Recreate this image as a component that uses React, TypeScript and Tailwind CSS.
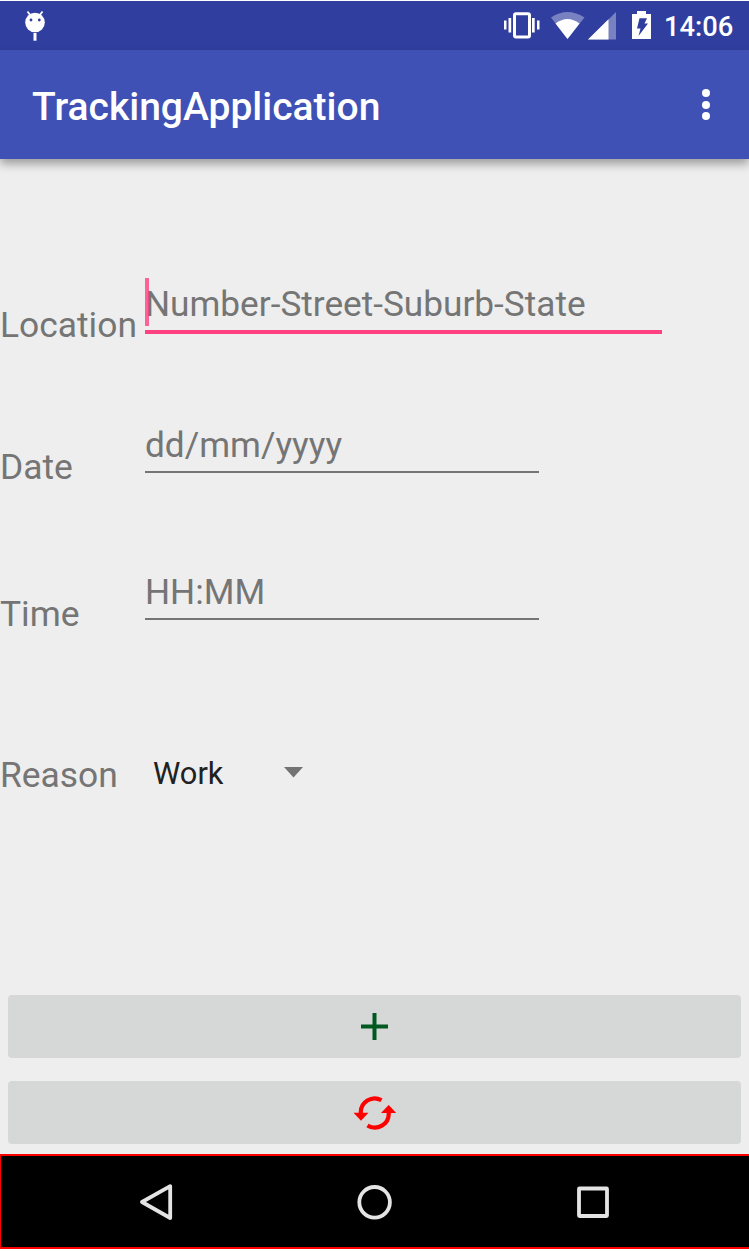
import React from 'react';

function StatusIcons() {
  return (
    <svg className="block h-[49px] w-[160px]" viewBox="500 1 160 49" fill="#fff">
      <path d="M504 20.5h2.500v9H504zM508.500 18h2.700v14.500h-2.700zM532 18h2.700v14.500H532zM537 20.500h2.500v9H537z" />
      <rect x="514.500" y="13.700" width="15" height="23.300" rx="1.500" fill="none" stroke="#fff" strokeWidth="3" />
      <path d="M567.500 39 551 17.500Q567.500 6.500 584.500 17.500Z" opacity=".35" />
      <path d="M567.500 39 555.500 23.500Q567.500 14.500 579.500 23.500Z" />
      <path d="M588 39.500 616 12V39.500Z" opacity=".35" />
      <path d="M588 39.500 608.500 19.300V39.500Z" />
      <path d="M632 14h5v-3h9v3h5v25h-19z" />
      <path d="M639.500 18.300h7.500l-2.500 5.200h3.500l-9.500 12.500 2-7.500h-3.500z" fill="#303f9f" />
    </svg>
  );
}

function StatusBar() {
  return (
    <header className="flex h-[49px] items-center justify-between bg-[#303f9f] pl-[24px] pr-[15px] text-white">
      <svg className="block h-[49px] w-[24px]" viewBox="24 1 24 49">
        <path d="m27.500 11.500 3 4M42.500 11.500l-3 4" stroke="#fff" strokeWidth="1.800" />
        <circle cx="35" cy="22.500" r="9.800" fill="#fff" />
        <path d="M33.500 33h3v7.700h-3z" fill="#fff" />
        <circle cx="31" cy="20" r="1.400" fill="#303f9f" />
        <circle cx="39.300" cy="20" r="1.400" fill="#303f9f" />
      </svg>
      <div className="flex items-center">
        <StatusIcons />
        <span className="ml-[4px] mt-[3px] w-[70px] whitespace-nowrap text-[27.300px] font-medium leading-[32px]">14:06</span>
      </div>
    </header>
  );
}

function AppBar() {
  return (
    <div className="relative flex h-[109px] items-center justify-between bg-[#3f51b5] pl-[32px] pr-[39px] text-white shadow-[0_5px_9px_rgba(0,0,0,0.34)]">
      <h1 className="mt-[5px] text-[39px] font-medium leading-[46px]">TrackingApplication</h1>
      <button aria-label="More options" className="flex flex-col gap-[3.500px]">
        <span className="size-[8px] rounded-full bg-white" />
        <span className="size-[8px] rounded-full bg-white" />
        <span className="size-[8px] rounded-full bg-white" />
      </button>
    </div>
  );
}

function Label({ children }: { children: React.ReactNode }) {
  return <label className="block w-[145px] shrink-0 whitespace-nowrap pt-[21px] text-[35.400px] leading-[42px]">{children}</label>;
}

function NavBar() {
  return (
    <nav className="flex h-[95px] items-center border-y-2 border-l border-[#f00] bg-black">
      <svg className="block h-[91px] w-full" viewBox="1 1156 748 91" fill="none" stroke="#e4e4e4" strokeWidth="3.800" strokeLinejoin="round">
        <path d="M142 1202 170.200 1186.200V1218Z" />
        <circle cx="374.600" cy="1202.300" r="15.300" />
        <rect x="579" y="1188.500" width="28" height="27.500" rx=".5" />
      </svg>
    </nav>
  );
}

export default function App() {
  return (
    <div className="flex h-[1251px] w-[749px] flex-col overflow-hidden bg-white pt-px font-[Roboto,sans-serif]">
      <StatusBar />
      <AppBar />
      <main className="flex h-[995px] flex-col bg-[#eee] text-[#757575]">
        <form className="pt-[119px]">
          <div className="flex h-[147px]">
            <div className="pt-[5px]"><Label>Location</Label></div>
            <div className="relative h-[56px] w-[517px] border-b-4 border-[#ff4081] pt-[5px]">
              <span className="block whitespace-nowrap text-[35.200px] leading-[42px]">Number-Street-Suburb-State</span>
              <span className="absolute left-0 top-0 h-[48px] w-[4px] bg-[#ff4081]/80" />
            </div>
          </div>
          <div className="flex h-[147px]">
            <Label>Date</Label>
            <div className="h-[48px] w-[394px] border-b-2 border-[#757575] text-[35.200px] leading-[41px]">dd/mm/yyyy</div>
          </div>
          <div className="flex h-[161px]">
            <Label>Time</Label>
            <div className="h-[48px] w-[394px] border-b-2 border-[#757575] text-[35.200px] leading-[41px]">HH:MM</div>
          </div>
          <div className="flex">
            <Label>Reason</Label>
            <div className="flex w-[158px] items-center justify-between pl-[8px] pt-[18px]">
              <span className="text-[30.800px] leading-[42px] text-[#212121]">Work</span>
              <svg className="-mt-[3px] h-[11px] w-[19px]" viewBox="0 0 19 11" fill="#737373"><path d="M0 0h19L9.500 10.500z" /></svg>
            </div>
          </div>
        </form>
        <div className="mt-auto flex flex-col gap-[23px] pb-[10px] pl-[8px] pr-[8px]">
          <button aria-label="Add" className="flex h-[63px] items-center justify-center rounded-[4px] bg-[#d6d8d7]">
            <svg className="h-[28px] w-[28px]" viewBox="0 0 28 28"><path d="M13.500 0v27M0 13.500h27" stroke="#00591f" strokeWidth="4" /></svg>
          </button>
          <button aria-label="Refresh" className="flex h-[63px] items-center justify-center rounded-[4px] bg-[#d6d8d7]">
            <svg className="h-[34px] w-[44px]" viewBox="353 1095.500 44 34">
              <path d="M381.500 1099.800A13.800 13.800 0 0 0 360.800 1112.500M367.500 1124.900A13.800 13.800 0 0 0 388.700 1112.500" fill="none" stroke="#f00" strokeWidth="4.200" />
              <path d="M353.500 1112.200h15l-7.500 8zM381 1112.400h15.200l-7.500-8z" fill="#f00" />
            </svg>
          </button>
        </div>
      </main>
      <NavBar />
    </div>
  );
}
